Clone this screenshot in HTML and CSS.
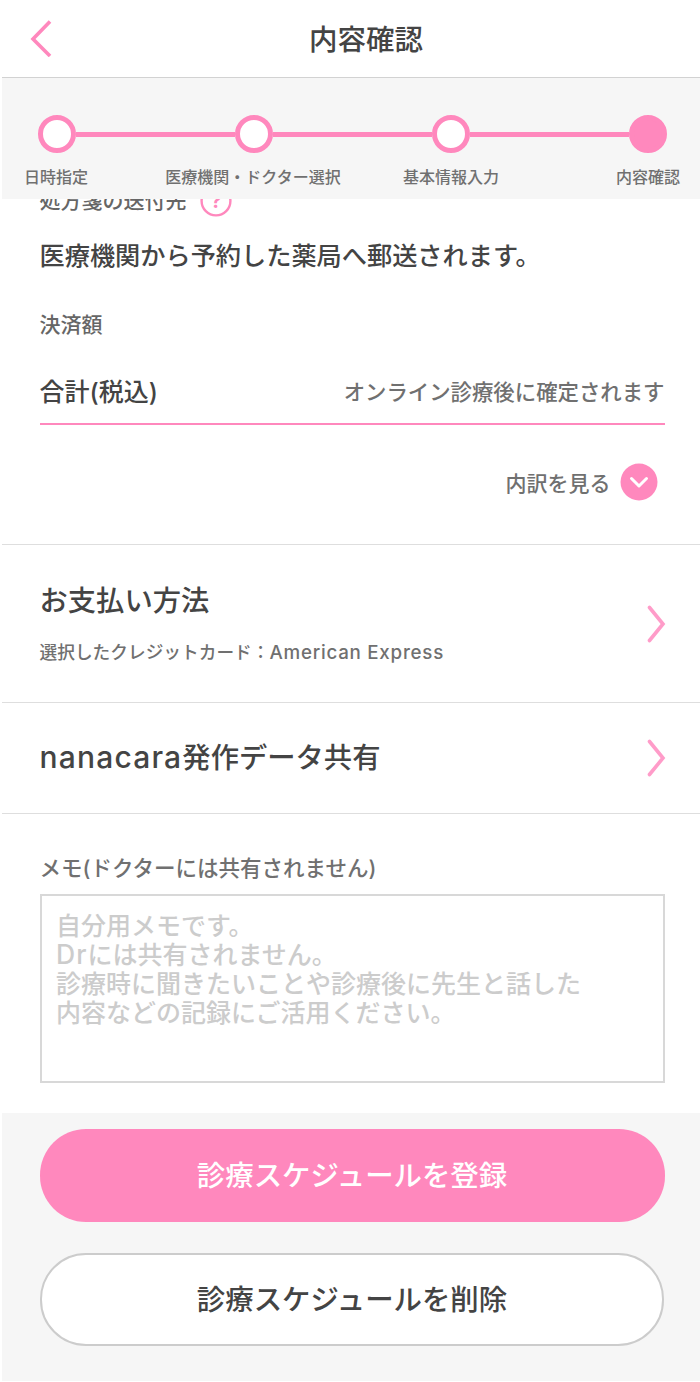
FILE: index.html
```html
<!DOCTYPE html>
<html lang="ja">
<head>
<meta charset="utf-8">
<title>内容確認</title>
<link rel="stylesheet" href="styles.css">
</head>
<body>
<div class="page">
  <header class="topbar">
    <svg class="back" width="24" height="38" viewBox="0 0 24 38"><path d="M21 2.5 L4 20 L21 37" fill="none" stroke="#ff88bd" stroke-width="3.6"/></svg>
    <h1 class="title">内容確認</h1>
  </header>
  <section class="stepper">
    <div class="track">
      <span class="dot"></span><span class="line"></span>
      <span class="dot"></span><span class="line"></span>
      <span class="dot"></span><span class="line"></span>
      <span class="dot dot-on"></span>
    </div>
    <div class="labels">
      <span class="lab lab1">日時指定</span>
      <span class="lab lab2">医療機関・ドクター選択</span>
      <span class="lab lab3">基本情報入力</span>
      <span class="lab lab4">内容確認</span>
    </div>
  </section>
  <main class="content">
    <div class="block">
      <div class="clipped">
        <span class="caption">処方箋の送付先</span>
        <svg class="help" width="32" height="32" viewBox="0 0 32 32"><circle cx="16" cy="16" r="14.4" fill="none" stroke="#ff88bd" stroke-width="2.4"/><text x="16" y="23" text-anchor="middle" class="help-q">?</text></svg>
      </div>
      <p class="lead">医療機関から予約した薬局へ郵送されます。</p>
      <p class="caption pay-label">決済額</p>
      <div class="total">
        <span class="total-name">合計(税込)</span>
        <span class="total-val">オンライン診療後に確定されます</span>
      </div>
      <div class="detail">
        <span class="detail-text">内訳を見る</span>
        <svg width="38" height="38" viewBox="0 0 38 38"><circle cx="19" cy="19" r="18.5" fill="#ff88bd"/><path d="M11.5 15.5 L19 23 L26.5 15.5" fill="none" stroke="#fff" stroke-width="3" stroke-linecap="round" stroke-linejoin="round"/></svg>
      </div>
    </div>
    <div class="row row-pay">
      <div>
        <div class="row-title">お支払い方法</div>
        <div class="row-sub">選択したクレジットカード：<span class="latin">American Express</span></div>
      </div>
      <svg class="chev" width="20" height="38" viewBox="0 0 20 38"><path d="M2.5 2.5 L16 19 L2.5 35.5" fill="none" stroke="#ff9cc9" stroke-width="3.6" stroke-linecap="round"/></svg>
    </div>
    <div class="row row-share">
      <div class="row-title"><span class="latin">nanacara</span>発作データ共有</div>
      <svg class="chev" width="20" height="38" viewBox="0 0 20 38"><path d="M2.5 2.5 L16 19 L2.5 35.5" fill="none" stroke="#ff9cc9" stroke-width="3.6" stroke-linecap="round"/></svg>
    </div>
    <div class="memo">
      <div class="memo-label">メモ(ドクターには共有されません)</div>
      <div class="memo-box">自分用メモです。<br><span class="latin">Dr</span>には共有されません。<br>診療時に聞きたいことや診療後に先生と話した<br>内容などの記録にご活用ください。</div>
    </div>
  </main>
  <footer class="actions">
    <button class="btn btn-primary">診療スケジュールを登録</button>
    <button class="btn btn-ghost">診療スケジュールを削除</button>
  </footer>
</div>
</body>
</html>
```
FILE: styles.css
```css
* { box-sizing: border-box; }
html, body { margin: 0; padding: 0; background: #fff; }
body { font-family: Inter, "Noto Sans CJK JP", "Noto Sans", sans-serif; color: #444; }
.page { width: 700px; height: 1381px; padding-left: 2px; display: flex; flex-direction: column; overflow: hidden; }
.latin { font-size: 1.06em; letter-spacing: .04em; line-height: 1; }
.topbar { height: 78px; flex: none; border-bottom: 1px solid #d2d2d2; display: flex; align-items: center; justify-content: center; position: relative; background: #fff; }
.back { position: absolute; left: 27px; top: 19px; }
.title { margin: 0; font-size: 28.5px; font-weight: 500; line-height: 1; color: #444; position: relative; left: 15px; top: 2px; }
.stepper { height: 121px; flex: none; background: #f6f6f6; padding-top: 37px; position: relative; z-index: 1; }
.track { display: flex; align-items: center; padding: 0 33px 0 36px; }
.dot { width: 38px; height: 38px; border-radius: 50%; background: #fff; border: 5px solid #ff88bd; flex: none; }
.dot-on { background: #ff88bd; }
.line { flex: 1; height: 5px; background: #ff88bd; }
.labels { position: relative; height: 30px; margin-top: 12px; }
.lab { position: absolute; top: 0; font-size: 16px; line-height: 24px; font-weight: 500; color: #707070; white-space: nowrap; transform: translateX(-50%); }
.lab1 { left: 54px; }
.lab2 { left: 251px; }
.lab3 { left: 449px; }
.lab4 { left: 646px; }
.content { flex: 1; overflow: hidden; }
.block { padding: 0 35.5px 0 37.5px; height: 360px; border-bottom: 1px solid #dedede; }
.clipped { display: flex; align-items: center; gap: 13px; height: 32px; margin-top: -14px; }
.caption { font-size: 21px; font-weight: 500; color: #666; line-height: 28px; }
.help { flex: none; }
.help-q { font-size: 20px; font-weight: 700; fill: #ff88bd; }
.lead { margin: 21px 0 0; font-size: 25.2px; line-height: 36px; font-weight: 500; color: #444; white-space: nowrap; }
.pay-label { margin: 37px 0 0; line-height: 28px; }
.total { display: flex; justify-content: space-between; align-items: center; height: 65px; margin-top: 21px; padding-bottom: 3px; border-bottom: 2px solid #ff88bd; }
.total-name { font-size: 25px; font-weight: 500; color: #444; }
.total-val { font-size: 21.4px; font-weight: 500; color: #707070; white-space: nowrap; }
.detail { display: flex; justify-content: flex-end; align-items: center; gap: 9px; margin-top: 38px; padding-right: 7px; }
.detail-text { font-size: 21px; font-weight: 500; color: #707070; }
.row { display: flex; justify-content: space-between; align-items: center; padding: 0 33.5px 0 37.5px; border-bottom: 1px solid #dedede; }
.row-pay { height: 158px; }
.row-share { height: 111px; }
.row-title { font-size: 28.3px; font-weight: 500; color: #444; line-height: 40px; white-space: nowrap; }
.row-sub { font-size: 17.7px; font-weight: 500; color: #707070; line-height: 28px; margin-top: 18px; white-space: nowrap; }
.memo { padding: 39px 35.5px 0 37.5px; }
.memo-label { font-size: 21.5px; font-weight: 500; color: #707070; line-height: 30px; white-space: nowrap; }
.memo-box { margin-top: 11px; height: 189px; border: 2px solid #d8d8d8; padding: 15.5px 14.5px; font-size: 25px; line-height: 29.1px; font-weight: 500; color: #ccc; white-space: nowrap; }
.actions { height: 268px; flex: none; background: #f6f6f6; padding: 16px 35.5px 0 37.5px; display: flex; flex-direction: column; gap: 31px; }
.btn { height: 93px; padding: 0 0 4px; border-radius: 46px / 46px; font: 500 28.4px Inter, "Noto Sans CJK JP", sans-serif; border: 0; }
.btn-primary { background: #ff88bd; color: #fff; }
.btn-ghost { margin: 0 .5px; background: #fff; border: 2px solid #ccc; color: #444; }
```
